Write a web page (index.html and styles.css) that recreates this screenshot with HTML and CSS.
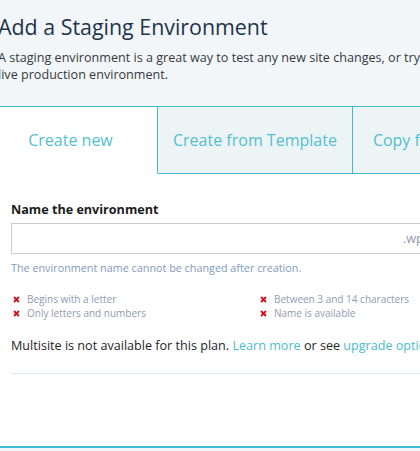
FILE: index.html
```html
<!DOCTYPE html>
<html>
<head>
<meta charset="utf-8">
<link rel="stylesheet" href="styles.css">
</head>
<body>
<div class="page">
  <header class="head">
    <h1 class="title">Add a Staging Environment</h1>
    <p class="desc">A staging environment is a great way to test any new site changes, or try out new plugins and themes, without affecting your live production environment.</p>
  </header>
  <nav class="tabs">
    <div class="tab active">Create new</div>
    <div class="tab">Create from Template</div>
    <div class="tab last">Copy from existing</div>
  </nav>
  <section class="form">
    <label class="label">Name the environment</label>
    <div class="input">
      <div class="field"></div>
      <span class="suffix">.wpengine.com</span>
    </div>
    <p class="help">The environment name cannot be changed after creation.</p>
    <ul class="reqs">
      <li><svg class="x" viewBox="0 0 8 8"><path d="M1.2 1.2 6.8 6.8M6.8 1.2 1.2 6.8"/></svg>Begins with a letter</li>
      <li><svg class="x" viewBox="0 0 8 8"><path d="M1.2 1.2 6.8 6.8M6.8 1.2 1.2 6.8"/></svg>Between 3 and 14 characters</li>
      <li><svg class="x" viewBox="0 0 8 8"><path d="M1.2 1.2 6.8 6.8M6.8 1.2 1.2 6.8"/></svg>Only letters and numbers</li>
      <li><svg class="x" viewBox="0 0 8 8"><path d="M1.2 1.2 6.8 6.8M6.8 1.2 1.2 6.8"/></svg>Name is available</li>
    </ul>
    <p class="multi">Multisite is not available for this plan. <a href="#">Learn more</a> or see <a href="#">upgrade options</a>.</p>
    <hr class="divider">
  </section>
  <footer class="foot"></footer>
</div>
</body>
</html>
```

FILE: styles.css
```css
html, body {
  margin: 0;
  padding: 0;
  overflow: hidden;
  background: #fff;
}
body {
  font-family: "Open Sans", "Liberation Sans", sans-serif;
  width: 420px;
  height: 451px;
}
.page {
  width: 800px;
}
.head {
  background: #f3f6f9;
  height: 106px;
  padding: 12px 0 0 0;
  box-sizing: border-box;
  margin-left: -2px;
}
.title {
  margin: 0;
  font-size: 21.4px;
  line-height: 30px;
  font-weight: 400;
  color: #1d344b;
}
.desc {
  margin: 8px 0 0 0;
  width: 740px;
  font-size: 12.6px;
  line-height: 16.5px;
  color: #333a40;
}
.tabs {
  display: flex;
  margin-left: -16px;
  height: 68px;
  background: #f3f6f9;
}
.tab {
  display: flex;
  align-items: center;
  justify-content: center;
  padding: 0 15px;
  box-sizing: border-box;
  font-size: 16px;
  color: #52bfd0;
  background: #edf4f6;
  border: 1px solid #40bccf;
  border-left: none;
}
.tab.active {
  width: 174px;
  background: #fff;
  border-bottom-color: #fff;
}
.tab.last {
  padding-left: 20px;
}
.form {
  padding: 27px 0 0 11px;
  height: 272px;
  box-sizing: border-box;
}
.label {
  display: block;
  font-size: 12.6px;
  line-height: 18px;
  font-weight: 700;
  color: #1a1d21;
}
.input {
  display: flex;
  align-items: center;
  margin-top: 4px;
  height: 31px;
  width: 600px;
  box-sizing: border-box;
  border: 1px solid #cccccc;
}
.field {
  width: 391px;
}
.suffix {
  font-size: 12.6px;
  color: #8f9cab;
}
.help {
  margin: 6px 0 0 0;
  font-size: 10.8px;
  line-height: 16px;
  color: #7e9bbd;
}
.reqs {
  list-style: none;
  margin: 16px 0 0 2px;
  padding: 0;
  display: grid;
  grid-template-columns: 247px 300px;
}
.reqs li {
  display: flex;
  align-items: center;
  gap: 7px;
  font-size: 10px;
  line-height: 14px;
  color: #8e9cb0;
}
.x {
  width: 7px;
  height: 7px;
  flex: none;
}
.x path {
  stroke: #d0121b;
  stroke-width: 2.2;
  fill: none;
}
.multi {
  margin: 17px 0 0 0;
  font-size: 12.6px;
  line-height: 18px;
  color: #1e2428;
  white-space: nowrap;
}
.multi a {
  color: #4bbccf;
  text-decoration: none;
}
.divider {
  margin: 18px 0 0 0;
  border: none;
  border-top: 1px solid #e1e8ee;
  height: 0;
}
.foot {
  border-top: 2px solid #40bccf;
  background: #f3f6f9;
  height: 10px;
}
```
